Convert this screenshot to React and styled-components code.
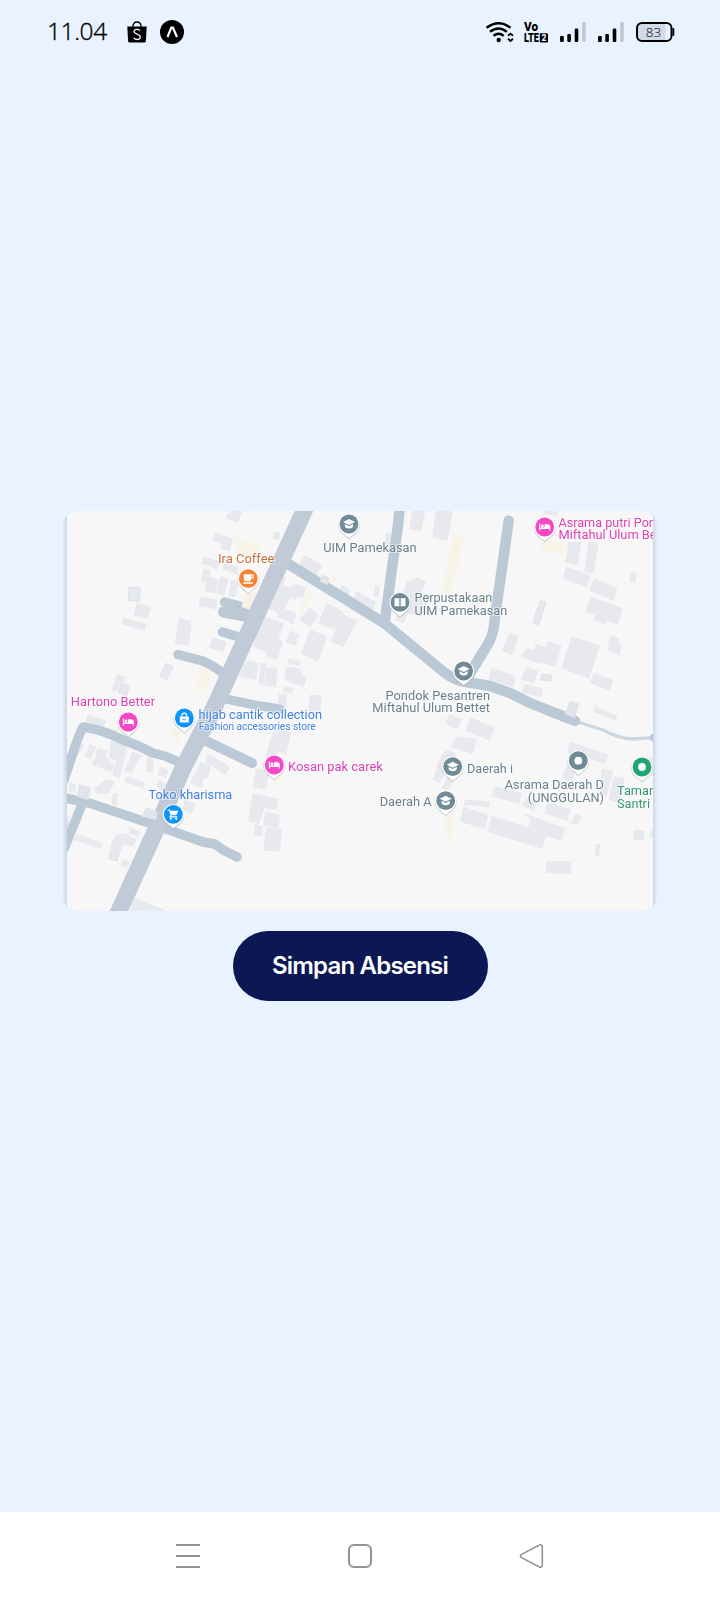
import React from "react";
import styled, { createGlobalStyle } from "styled-components";

const GlobalStyle = createGlobalStyle`
  * { box-sizing: border-box; }
  body { margin: 0; background: #e8f3ff; }
`;

const Screen = styled.div`
  display: flex;
  flex-direction: column;
  width: 720px;
  height: 1600px;
  background: #e8f3ff;
  font-family: "Open Sans", "Noto Sans", sans-serif;
`;

const StatusBar = styled.header`
  display: flex;
  justify-content: space-between;
  align-items: center;
  height: 64px;
  padding: 0 45px 0 47px;
`;

const StatusGroup = styled.div`
  display: flex;
  align-items: center;
  gap: ${(p) => p.$gap || 0}px;
`;

const Clock = styled.span`
  width: 60px;
  margin-right: 20px;
  font-size: 24.5px;
  line-height: 32px;
  padding-bottom: 2px;
  font-weight: 300;
  letter-spacing: -0.4px;
  -webkit-text-stroke: 0.35px #000;
  white-space: nowrap;
  color: #000;
`;

const Content = styled.main`
  flex: 1;
  display: flex;
  flex-direction: column;
  align-items: center;
  padding-top: 447px;
`;

const MapCard = styled.section`
  width: 596px;
  height: 400px;
  margin-bottom: 20px;
  border-radius: 16px;
  overflow: hidden;
  background: linear-gradient(
    to right,
    #e7f1fd 0,
    #ccd7e3 5px,
    #ccd7e3 591px,
    #e7f1fd 595px
  );
`;

const MapCanvas = styled.svg`
  display: block;
  font-family: Roboto, sans-serif;
`;

const SaveButton = styled.button`
  width: 255px;
  height: 70px;
  border: 0;
  padding: 0 0 2px;
  border-radius: 35px;
  background: #0b1854;
  color: #fff;
  font-family: Inter, sans-serif;
  font-size: 24px;
  font-weight: 600;
  letter-spacing: -0.8px;
  white-space: nowrap;
`;

const NavBar = styled.nav`
  display: flex;
  justify-content: space-between;
  align-items: center;
  height: 88px;
  padding: 0 174px;
  background: #fff;
`;

const NavIcon = styled.svg`
  width: 28px;
  height: 28px;
  fill: none;
  stroke: #939393;
  stroke-width: 2;
`;

/* Each survey sheet has its own origin and is drawn at three units per pixel. */
const sheets = [
  {
    at: [56, 500],
    buildings: [
      "522,33 560,33 545,68 508,55",
      "478,97 532,117 520,155 495,147 498,133 470,122",
      "653,93 672,96 670,120 651,117",
      "443,167 494,187 485,208 435,190",
      "505,190 548,200 545,225 500,208",
      "443,205 462,212 460,230 487,238 478,280 447,272 450,250 434,243",
      "492,228 518,236 505,288 480,280",
      "525,240 548,245 538,292 518,288",
      "432,290 485,298 480,328 427,318",
      "243,308 287,320 275,358 232,346",
      "202,352 272,372 266,392 196,372",
      "368,352 405,365 402,372 408,374 398,436 356,432",
      "470,412 512,426 502,456 460,444",
      "185,522 208,532 195,575 166,572",
      "672,228 692,232 680,255 716,270 675,345 635,325",
      "672,320 720,338 712,372 664,352",
      "612,346 684,370 668,415 682,425 664,480 628,470 632,455 592,440",
      "700,395 722,400 722,438 688,428",
      "570,480 607,490 600,540 548,530",
      "615,487 632,490 622,555 607,550",
      "630,500 665,508 660,562 624,558",
      "698,475 735,485 730,498 694,490",
      "690,500 722,510 720,550 685,540",
      "682,560 712,562 708,580 680,576",
      "668,580 694,582 690,620 664,618",
    ],
    outlined: [
      "219,261 253,264 250,304 216,302",
      "330,490 351,502 332,539 312,527",
      "196,550 220,556 212,588 190,580",
    ],
    sand: [
      "540,112 610,135 612,165 560,160 538,140",
      "430,500 468,510 445,582 424,578",
    ],
  },
  {
    at: [290, 500],
    buildings: [
      "365,33 406,33 394,95 358,88",
      "437,33 490,33 472,122 426,112",
      "288,98 310,104 300,140 284,130",
      "45,165 98,195 80,228 22,200",
      "155,255 182,270 175,285 148,270",
      "200,272 260,308 245,332 188,295",
      "256,256 270,258 266,290 250,290",
      "350,245 385,232 408,245 396,275 420,290 395,350 355,340 340,370 315,358",
      "0,262 15,252 48,262 40,292 25,290 12,300 5,290",
      "58,322 88,345 60,382 28,360",
      "110,308 160,335 135,390 85,370",
      "155,340 203,362 160,440 122,425",
      "0,330 20,345 10,370 0,372",
      "0,390 28,405 15,435 0,430",
      "60,388 112,410 85,485 33,462",
      "0,475 28,485 25,497 0,490",
      "0,498 38,510 34,525 50,532 42,560 0,548",
      "58,585 95,585 92,640 55,638",
    ],
    outlined: [],
    sand: [
      "490,108 523,108 482,283 455,283",
      "125,225 140,232 132,250 118,245",
      "55,270 72,275 40,338 28,330",
    ],
  },
  {
    at: [460, 500],
    buildings: [
      "252,33 295,33 292,48 248,40",
      "325,125 365,125 352,197 315,188",
      "385,125 417,128 400,222 372,215",
      "318,200 392,225 380,262 308,235",
      "402,235 472,265 460,302 388,272",
      "392,290 488,325 474,374 440,362 437,375 400,360 405,345 375,335",
      "512,216 528,218 526,250 508,247",
      "148,398 178,408 156,465 125,452",
      "200,445 222,450 228,432 258,442 242,492 182,472",
      "262,424 305,436 285,502 245,488",
      "335,408 420,437 388,536 304,505",
      "452,405 478,415 475,428 488,432 478,467 440,448",
      "95,503 168,528 160,562 85,538",
      "198,500 235,512 222,550 182,540",
      "192,552 248,565 242,592 186,578",
      "402,518 458,540 450,572 390,550",
      "405,622 435,630 430,636 402,630",
    ],
    outlined: [
      "240,302 258,308 236,374 218,368",
      "245,522 274,526 272,543 243,540",
    ],
    sand: ["245,122 322,125 315,165 245,150"],
  },
  {
    at: [56, 700],
    buildings: [
      "95,42 152,62 142,85 88,70",
      "65,130 85,135 65,165 52,160",
      "100,132 120,140 105,178 88,170",
      "125,145 155,150 150,170 175,195 165,215 108,195",
      "165,120 215,140 190,235 168,225 180,180 158,175",
      "228,155 258,165 225,220 205,212",
      "275,170 292,175 292,218 270,212",
      "312,200 338,210 330,235 305,225",
      "212,228 268,248 260,266 205,245",
      "308,240 330,250 322,272 300,262",
      "455,160 522,200 508,225 448,185",
      "435,185 465,195 455,235 445,235 435,265 402,248",
      "385,300 420,310 408,342 380,330",
      "40,245 60,252 58,280 38,275",
      "150,237 176,245 160,280 120,282 115,265 135,250",
      "170,278 187,282 182,317 166,313",
      "30,348 42,352 38,382 30,380",
      "62,402 142,430 138,446 52,420",
      "222,382 252,395 245,410 218,400",
      "180,405 205,400 243,418 230,440 205,432 188,465 162,455 165,430",
      "200,478 222,485 215,502 194,497",
      "235,592 332,633 222,633",
      "655,88 705,95 690,165 665,155 660,185 628,175 640,130",
      "600,205 640,215 630,270 590,262",
      "590,280 667,297 660,330 625,325 610,372 576,365",
      "628,335 672,345 668,385 620,378",
      "598,372 620,378 618,410 592,405",
      "630,382 678,388 672,455 622,452",
    ],
    outlined: ["162,458 188,462 184,482 160,478"],
    sand: [
      "160,70 190,85 185,105 160,95",
      "345,85 378,100 365,125 342,115",
      "655,225 678,235 675,262 655,255",
    ],
  },
  {
    at: [290, 660],
    buildings: [
      "478,162 515,178 502,208 467,192",
      "500,228 562,238 548,282 484,262",
      "470,270 500,280 448,370 428,360 450,290",
      "470,350 490,358 475,390 455,385",
    ],
    outlined: [],
    sand: ["465,465 490,468 490,535 468,535"],
  },
  {
    at: [460, 690],
    buildings: [
      "32,82 104,113 90,152 17,122",
      "190,0 250,0 242,20 186,5",
      "405,48 473,78 466,92 400,66",
      "332,155 445,195 435,222 365,198 335,275 305,265 330,200 322,180",
      "425,235 460,242 440,320 418,315",
      "460,260 495,265 480,340 445,330",
      "105,288 185,310 178,342 95,318",
      "15,328 90,335 88,352 12,345",
      "200,325 230,335 222,362 186,348",
      "262,335 332,358 322,392 252,370",
      "10,350 85,375 75,418 0,395",
      "95,378 205,412 212,390 190,372 200,372 315,415 305,452 258,438 248,477 82,425",
      "347,370 366,380 350,408 332,398",
      "408,462 421,462 418,498 404,498",
      "260,512 334,514 333,552 257,548",
      "522,420 554,422 552,452 518,450",
      "570,422 580,422 580,442 568,440",
      "550,210 580,200 580,260",
    ],
    outlined: [],
    sand: [],
  },
];

const lanes = [
  ["M285 562 L384 623 L445 673 Q456 681 466 682 L490 686 L510 693 L530 703 L575 721", 10.5],
  ["M400 506 L398 525 L390 583 L384.5 623", 10.5],
  ["M508.7 520.7 L495 617 Q494 634 488 644 L466 680", 10.5],
  ["M224.5 602 L248 608", 9.5],
  ["M223.5 612 L250 617", 11],
  ["M222.5 632 L239 637", 9.5],
  ["M178 654.5 L203 661 Q212 665 223 673", 9.5],
  ["M221 698 L255 705 L280 709", 9],
  ["M204 740 L252 763", 10],
  ["M181 763 L165 756 L153 753 Q140 746 123 740 Q104 730 83 727 Q77 739 73 753 L64 780", 9.5],
  ["M60 797 L89 803 L149 823 L203 842 L215 844 L223 850 L237 857 M81 807 L64 849", 9.5],
];

const structuresAboveLanes = [
  "78.7,784 91,787.3 88.7,800 76.7,796.7",
  "146,806.7 157.7,811.7 156,820 142,816.7",
  "321.7,574 330,578.3 327.3,585 320,581.7",
  "570,700.7 579.3,703.3 575,718.3 564.7,714",
];

const GREY = { pin: "#718a98", text: "#6a808d" };
const PINK = { pin: "#f646c4", text: "#dc3fb4" };
const BLUE = { pin: "#1094fa", text: "#3f81e2" };
const ORANGE = { pin: "#f98334", text: "#ca703f" };
const GREEN = { pin: "#20a574", text: "#359671" };

const pins = [
  [349, 524, GREY, "school"],
  [400, 602.3, GREY, "book"],
  [463.7, 671, GREY, "school"],
  [452.7, 766.7, GREY, "school"],
  [445.7, 800.7, GREY, "school"],
  [578.3, 760.7, GREY, "dot"],
  [642, 767, GREEN, "dot"],
  [544.7, 527, PINK, "bed"],
  [248.3, 578.7, ORANGE, "cup"],
  [128.3, 722, PINK, "bed"],
  [184.3, 718, BLUE, "bag"],
  [274.3, 765, PINK, "bed"],
  [173.3, 814.3, BLUE, "cart"],
];

/* text, x, baseline, width, palette, font size */
const labels = [
  ["UIM Pamekasan", 323.3, 552.3, 93.4, GREY],
  ["Perpustakaan", 414.5, 602.3, 77.8, GREY],
  ["UIM Pamekasan", 414.5, 615, 92.8, GREY],
  ["Pondok Pesantren", 385.5, 699.5, 104.5, GREY],
  ["Miftahul Ulum Bettet", 372.3, 712.3, 117.7, GREY],
  ["Daerah i", 467, 772.5, 46, GREY],
  ["Daerah A", 379.7, 806.3, 52, GREY],
  ["Asrama Daerah D", 504.7, 788.5, 99.3, GREY],
  ["(UNGGULAN)", 527.8, 801.5, 76.2, GREY],
  ["Taman", 617, 794.5, 39, GREEN],
  ["Santri", 617, 807.5, 33, GREEN],
  ["Asrama putri Pondok", 558.5, 526.5, 118, PINK],
  ["Miftahul Ulum Bettet", 558.5, 539.3, 117.5, PINK],
  ["Ira Coffee", 218, 562.8, 56.5, ORANGE],
  ["Hartono Better", 70.8, 706, 84.2, PINK],
  ["hijab cantik collection", 198.5, 719.3, 123.5, BLUE],
  ["Fashion accessories store", 198.7, 729.5, 117, BLUE, 10],
  ["Kosan pak carek", 288, 770.7, 94.8, PINK],
  ["Toko kharisma", 148.5, 799, 83.8, BLUE],
];

const glyphs = {
  school: (
    <g fill="#fff">
      <path d="M0-5 L6-2 L0 1 L-6-2Z" />
      <path d="M-4 0 L0 2.2 L4 0 V3 Q0 6.2-4 3Z" />
    </g>
  ),
  book: <path d="M-5.5-4 H-.7 V4 H-5.5Z M.7-4 H5.5 V4 H.7Z" fill="#fff" />,
  dot: <circle r="3.9" fill="#fff" />,
  bed: (
    <g fill="#fff">
      <path d="M-5.5-3.5 H-4.4 V.5 H-.2 V-2.7 H3 Q5.5-2.7 5.5 0 V3.5 H4.4 V2 H-4.4 V3.5 H-5.5Z" />
      <circle cx="-2.3" cy="-1" r="1.4" />
    </g>
  ),
  cup: (
    <g>
      <path d="M-4.5-4.5 H3 V0 Q3 2.5 .5 2.5 H-2 Q-4.5 2.5-4.5 0Z M-5 3.6 H4.5 V5 H-5Z" fill="#fff" />
      <path d="M3-3.6 H4.8 V-.8 H3" fill="none" stroke="#fff" strokeWidth="1.1" />
    </g>
  ),
  bag: (
    <g>
      <path d="M-4.5-1.5 H4.5 V4.5 H-4.5Z" fill="#fff" />
      <path d="M-2.3-1.5 V-2.8 Q-2.3-4.8 0-4.8 Q2.3-4.8 2.3-2.8 V-1.5" fill="none" stroke="#fff" strokeWidth="1.2" />
      <path d="M-1.8 1 Q0 2.8 1.8 1" fill="none" stroke="#1094fa" strokeWidth=".9" />
    </g>
  ),
  cart: (
    <g fill="#fff">
      <path d="M-5.5-4.8 H-3.5 L-3-3.6 H5 L3 1 H-1.8 L-2.4 2 H4 V3.2 H-4.2 L-2.8.5 L-4.3-3.7 H-5.5Z" />
      <circle cx="-2.4" cy="4.5" r="1.1" />
      <circle cx="2.9" cy="4.5" r="1.1" />
    </g>
  ),
};

const pinShape = "M0 14.3 L-6.5 8.8 A10.6 10.6 0 1 1 6.5 8.8Z";

function Pin({ x, y, color, kind }) {
  return (
    <g transform={`translate(${x} ${y})`}>
      <path d={pinShape} transform="translate(0 .7)" fill="#9aa3aa" fillOpacity=".5" stroke="#9aa3aa" strokeOpacity=".35" />
      <path d={pinShape} fill="#fff" />
      <circle r="9.4" fill={color} />
      {glyphs[kind]}
    </g>
  );
}

function AreaMap() {
  return (
    <MapCanvas width="596" height="400" viewBox="62 511 596 400">
      <defs>
        <clipPath id="tile">
          <rect x="67" y="511" width="586" height="400" />
        </clipPath>
        <filter id="soft" x="0" y="0" width="100%" height="100%">
          <feGaussianBlur stdDeviation=".6" />
        </filter>
      </defs>
      <g clipPath="url(#tile)">
        <rect x="62" y="511" width="596" height="400" fill="#f7f7f7" />
        <g filter="url(#soft)">
          {sheets.map((s, i) => (
            <g key={i} transform={`translate(${s.at[0]} ${s.at[1]}) scale(.33333)`}>
              {s.sand.map((p) => (
                <polygon key={p} points={p} fill="#f9f4e8" />
              ))}
              {s.buildings.map((p) => (
                <polygon key={p} points={p} fill="#e8e9ee" />
              ))}
              {s.outlined.map((p) => (
                <polygon key={p} points={p} fill="#e5e8ec" stroke="#dce1e7" strokeWidth="3" />
              ))}
            </g>
          ))}
          <path
            d="M575 721 L603 730 Q620 739 633 739 L656 737.5"
            fill="none"
            stroke="#cdd7e0"
            strokeWidth="3.4"
          />
          <circle cx="654" cy="737.5" r="4" fill="#bbc8d5" />
          {lanes.map(([d, w]) => (
            <path
              key={d}
              d={d}
              fill="none"
              stroke="#bbc9d6"
              strokeWidth={w}
              strokeLinecap="round"
              strokeLinejoin="round"
            />
          ))}
          <polygon points="245,594 258,593 250,610 241.5,607" fill="#f7f1e5" />
          <path
            d="M308.5 501 L304 511 L213 710 L183 768 L154 834 L119 911 L114 922"
            fill="none"
            stroke="#c1cbd7"
            strokeWidth="17"
            strokeLinejoin="round"
          />
          {structuresAboveLanes.map((p) => (
            <polygon key={p} points={p} fill="#e1e4ea" />
          ))}
          {pins.map(([x, y, c, kind]) => (
            <Pin key={`${x}-${y}`} x={x} y={y} color={c.pin} kind={kind} />
          ))}
          {labels.map(([t, x, y, w, c, size]) => (
            <text
              key={`${t}-${x}-${y}`}
              x={x}
              y={y}
              textLength={w}
              lengthAdjust="spacingAndGlyphs"
              fontSize={size || 12.4}
              fill={c.text}
              stroke="#fff"
              strokeOpacity=".6"
              strokeWidth="2"
              strokeLinejoin="round"
              paintOrder="stroke"
            >
              {t}
            </text>
          ))}
        </g>
      </g>
    </MapCanvas>
  );
}

function ShopIcon() {
  return (
    <svg width="20" height="22" viewBox="0 0 20 22">
      <path d="M.3 5.5 H19.7 L18.9 20 Q18.8 21.5 17.3 21.5 H2.7 Q1.2 21.5 1.1 20Z" />
      <path d="M5.8 6 Q6 1 10 1 Q14 1 14.2 6" fill="none" stroke="#000" strokeWidth="1.3" />
      <path
        d="M13 9.6 C11 7.6 7 8 7 10.6 C7 13.5 13.3 12.6 13.3 16 C13.3 18.9 9 19.3 6.6 17"
        fill="none"
        stroke="#e8f3ff"
        strokeWidth="1.3"
      />
    </svg>
  );
}

function ExpoIcon() {
  return (
    <svg width="24" height="24" viewBox="0 0 24 24">
      <circle cx="12" cy="12" r="12" />
      <path d="M7.5 17 L11.3 7.5 H12.9 L17 17" fill="none" stroke="#fff" strokeWidth="2.2" />
    </svg>
  );
}

function WifiIcon() {
  return (
    <svg width="29" height="22" viewBox="0 0 29 22">
      <g fill="none" stroke="#000" strokeWidth="2.4">
        <path d="M1.5 6.8 Q13.7 -2.4 25.5 6.8" />
        <path d="M5 10.8 Q13.7 4 21.8 10.8" />
        <path d="M8.5 14.8 Q13.7 10.6 18.7 14.8" />
      </g>
      <circle cx="13.7" cy="19" r="2.2" />
      <path d="M23 14.8 L25.5 12.6 L28 14.8 M23 17.8 L25.5 20 L28 17.8" fill="none" stroke="#000" strokeWidth="1.8" />
    </svg>
  );
}

function VolteIcon() {
  return (
    <svg width="25" height="21" viewBox="0 0 25 21" fontFamily="Roboto, sans-serif" fontWeight="900">
      <text x="1" y="9.3" fontSize="12" textLength="14" lengthAdjust="spacingAndGlyphs">Vo</text>
      <text x="1" y="20.3" fontSize="13" textLength="15" lengthAdjust="spacingAndGlyphs">LTE</text>
      <rect x="16.8" y="11.3" width="8.2" height="9.3" rx="1" />
      <text x="18.6" y="19" fontSize="8.5" fill="#e8f3ff">2</text>
    </svg>
  );
}

function SignalIcon() {
  return (
    <svg width="26" height="20" viewBox="0 0 26 20">
      <rect x="0" y="14" width="3.8" height="6" rx="1.2" />
      <rect x="7.3" y="12" width="3.6" height="8" rx="1.2" />
      <rect x="14.7" y="6.5" width="3.6" height="13.5" rx="1.2" />
      <rect x="22.2" y="0" width="3.6" height="20" rx="1.2" fill="#bfc8d3" />
    </svg>
  );
}

function BatteryIcon() {
  return (
    <svg width="39" height="20" viewBox="0 0 39 20">
      <path d="M6 1 H29.5 V19 H6 Q1 19 1 14 V6 Q1 1 6 1Z" fill="#d3dae7" />
      <rect x="1" y="1" width="34.5" height="18" rx="5" fill="none" stroke="#000" strokeWidth="2" />
      <rect x="36.5" y="6" width="1.8" height="8" rx=".9" />
      <text x="9.7" y="14.6" fontSize="13.5" fontWeight="300" textLength="15.6" fontFamily="Open Sans, sans-serif" fill="#000">83</text>
    </svg>
  );
}

export default function App() {
  return (
    <>
      <GlobalStyle />
      <Screen>
        <StatusBar>
          <StatusGroup $gap={13}>
            <StatusGroup>
              <Clock>11.04</Clock>
              <ShopIcon />
            </StatusGroup>
            <ExpoIcon />
          </StatusGroup>
          <StatusGroup $gap={12}>
            <StatusGroup $gap={9}>
              <WifiIcon />
              <VolteIcon />
            </StatusGroup>
            <SignalIcon />
            <SignalIcon />
            <BatteryIcon />
          </StatusGroup>
        </StatusBar>
        <Content>
          <MapCard>
            <AreaMap />
          </MapCard>
          <SaveButton type="button">Simpan Absensi</SaveButton>
        </Content>
        <NavBar>
          <NavIcon viewBox="0 0 28 28">
            <path d="M2 3 H26 M2 14 H26 M2 25 H26" />
          </NavIcon>
          <NavIcon viewBox="0 0 28 28">
            <rect x="3" y="3" width="22" height="22" rx="5" />
          </NavIcon>
          <NavIcon viewBox="0 0 28 28">
            <path
              d="M3.5 12.4 L21.5 3 Q24.3 2.2 24.3 5 V23 Q24.3 25.8 21.5 25 L3.5 15.6 Q1.5 14 3.5 12.4Z"
              strokeWidth="1.6"
            />
          </NavIcon>
        </NavBar>
      </Screen>
    </>
  );
}
